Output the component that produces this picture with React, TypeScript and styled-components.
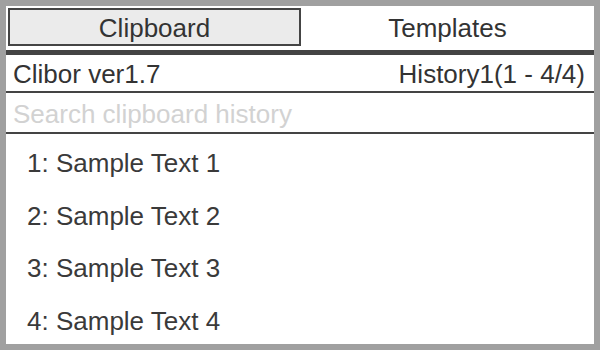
import React, { useState } from 'react';
import styled, { createGlobalStyle } from 'styled-components';

const GlobalStyle = createGlobalStyle`
  html, body {
    margin: 0;
    padding: 0;
    background: #a0a0a0;
  }
  * {
    box-sizing: border-box;
  }
`

const Window = styled.div`
  width: 600px;
  height: 350px;
  border: 6px solid #a0a0a0;
  background: #fff;
  display: flex;
  flex-direction: column;
  font-family: "Helvetica Neue", "Liberation Sans", Arial, sans-serif;
  font-size: 26px;
  color: #333;
  overflow: hidden;
`

const TabBar = styled.div`
  display: grid;
  grid-template-columns: 1fr 1fr;
  height: 49px;
  padding: 2px 0 4px 2px;
  border-bottom: 5px solid #444;
`

const Tab = styled.button<{ $active?: boolean }>`
  font: inherit;
  color: #333;
  padding: 3px 0 0;
  margin: 0;
  border: 2px solid ${p => (p.$active ? '#444' : 'transparent')};
  background: ${p => (p.$active ? '#ebebeb' : '#fff')};
  cursor: pointer;
`

const InfoRow = styled.div`
  display: flex;
  justify-content: space-between;
  align-items: center;
  height: 39px;
  padding: 2px 9px 0 7px;
  border-bottom: 2px solid #444;
`

const Search = styled.input`
  display: block;
  width: 100%;
  height: 42px;
  padding: 4px 7px 0;
  border: none;
  border-bottom: 2px solid #444;
  outline: none;
  font: inherit;
  color: #333;

  &::placeholder {
    color: #d2d2d2;
  }
`

const List = styled.ul`
  list-style: none;
  margin: 0;
  padding: 0;
`

const Item = styled.li`
  height: 52.5px;
  line-height: 52px;
  padding: 3px 0 0 21px;
  color: #3a3a3a;
  white-space: nowrap;
`

const items = ['Sample Text 1', 'Sample Text 2', 'Sample Text 3', 'Sample Text 4']

export default function App() {
  const [tab, setTab] = useState<'clip' | 'tmpl'>('clip')
  const [query, setQuery] = useState('')
  const shown = items.filter(t => t.toLowerCase().includes(query.toLowerCase()))

  return (
    <>
      <GlobalStyle />
      <Window>
        <TabBar>
          <Tab $active={tab === 'clip'} onClick={() => setTab('clip')}>Clipboard</Tab>
          <Tab $active={tab === 'tmpl'} onClick={() => setTab('tmpl')}>Templates</Tab>
        </TabBar>
        <InfoRow>
          <span>Clibor ver1.7</span>
          <span>History1(1 - {shown.length}/{items.length})</span>
        </InfoRow>
        <Search
          placeholder="Search clipboard history"
          value={query}
          onChange={e => setQuery(e.target.value)}
        />
        <List>
          {shown.map((t, i) => <Item key={t}>{i + 1}: {t}</Item>)}
        </List>
      </Window>
    </>
  );
}
